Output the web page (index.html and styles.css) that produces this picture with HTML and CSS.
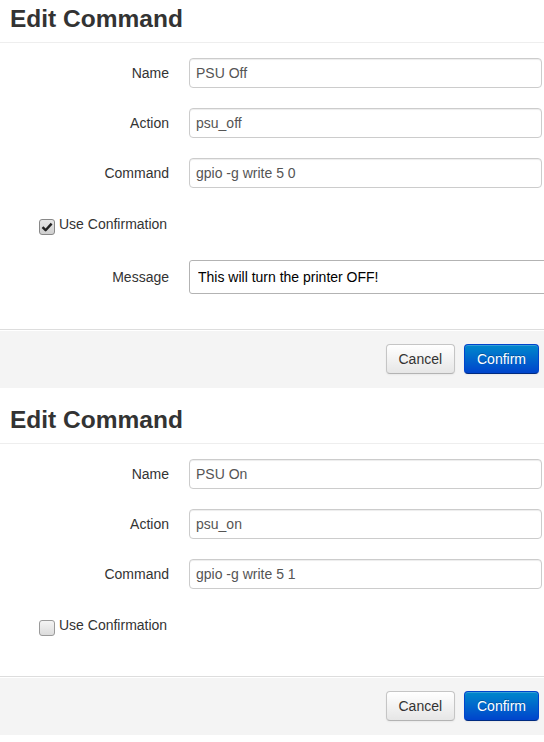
FILE: index.html
```html
<!DOCTYPE html>
<html lang="en">
<head>
  <meta charset="UTF-8">
  <meta name="viewport" content="width=device-width, initial-scale=1.0">
  <title>Edit Command</title>
  <link rel="stylesheet" href="styles.css">
</head>
<body>

<div class="modal">
  <div class="modal-header">
    <h3>Edit Command</h3>
  </div>
  <div class="modal-body">
    <div class="control-group">
      <label class="control-label">Name</label>
      <input type="text" class="field" value="PSU Off">
    </div>
    <div class="control-group">
      <label class="control-label">Action</label>
      <input type="text" class="field" value="psu_off">
    </div>
    <div class="control-group">
      <label class="control-label">Command</label>
      <input type="text" class="field" value="gpio -g write 5 0">
    </div>
    <label class="checkbox">
      <span class="check checked">
        <svg width="12" height="12" viewBox="0 0 12 12"><path d="M1.5 6.2 L4.6 9.2 L10.6 2.6" fill="none" stroke="#222" stroke-width="2.4" stroke-linejoin="round"/></svg>
      </span>
      Use Confirmation
    </label>
    <div class="control-group">
      <label class="control-label">Message</label>
      <input type="text" class="field message" value="This will turn the printer OFF!">
    </div>
  </div>
  <div class="modal-footer">
    <button class="btn">Cancel</button>
    <button class="btn btn-primary">Confirm</button>
  </div>
</div>

<div class="modal second">
  <div class="modal-header">
    <h3>Edit Command</h3>
  </div>
  <div class="modal-body">
    <div class="control-group">
      <label class="control-label">Name</label>
      <input type="text" class="field" value="PSU On">
    </div>
    <div class="control-group">
      <label class="control-label">Action</label>
      <input type="text" class="field" value="psu_on">
    </div>
    <div class="control-group">
      <label class="control-label">Command</label>
      <input type="text" class="field" value="gpio -g write 5 1">
    </div>
    <label class="checkbox">
      <span class="check"></span>
      Use Confirmation
    </label>
  </div>
  <div class="modal-footer">
    <button class="btn">Cancel</button>
    <button class="btn btn-primary">Confirm</button>
  </div>
</div>

</body>
</html>
```

FILE: styles.css
```css
html, body {
  margin: 0;
  overflow: hidden;
}
body {
  font-family: "Liberation Sans", Arial, sans-serif;
  font-size: 14px;
  line-height: 20px;
  color: #333;
  background-color: #fff;
}
.modal {
  overflow: hidden;
}
.second {
  margin-top: 13px;
}
.modal-header {
  height: 43px;
  padding: 0 10px;
  border-bottom: 1px solid #eee;
  box-sizing: border-box;
}
.modal-header h3 {
  margin: 0;
  padding-top: 3px;
  font-size: 24.5px;
  line-height: 32px;
  font-weight: bold;
  color: #333;
}
.modal-body {
  padding: 15px 0 15px 9px;
}
.control-group {
  display: flex;
  align-items: center;
  margin-bottom: 20px;
}
.control-label {
  flex: 0 0 160px;
  text-align: right;
  margin-right: 20px;
  color: #333;
}
.field {
  flex: 0 0 auto;
  width: 353px;
  height: 30px;
  box-sizing: border-box;
  padding: 4px 6px;
  border: 1px solid #ccc;
  border-radius: 4px;
  font-family: inherit;
  font-size: 14px;
  color: #555;
  background-color: #fff;
  box-shadow: inset 0 1px 1px rgba(0, 0, 0, 0.075);
  margin: 0;
}
.field.message {
  width: 420px;
  height: 34px;
  padding: 4px 8px;
  border-color: #b3b3b3;
  border-radius: 3px;
  color: #000;
  box-shadow: none;
}
.checkbox {
  display: flex;
  align-items: flex-start;
  height: 20px;
  padding: 6px 0 0 30px;
  margin-bottom: 26px;
  color: #333;
}
.check {
  flex: 0 0 16px;
  width: 16px;
  height: 16px;
  box-sizing: border-box;
  margin: 5px 4px 0 0;
  border: 1px solid #9a9a9a;
  border-radius: 3px;
  background: linear-gradient(#f4f4f4, #dcdcdc);
  display: flex;
  align-items: center;
  justify-content: center;
}
.check.checked {
  background: linear-gradient(#e6e6e6, #cfcfcf);
  border-color: #888;
}
.modal-footer {
  height: 59px;
  box-sizing: border-box;
  padding: 14px 5px 14px 15px;
  background-color: #f4f4f4;
  border-top: 1px solid #ddd;
  box-shadow: inset 0 1px 0 #fff;
  text-align: right;
}
.btn {
  height: 30px;
  padding: 4px 12px;
  font-family: inherit;
  font-size: 14px;
  line-height: 20px;
  color: #333;
  border: 1px solid #c5c5c5;
  border-bottom-color: #b3b3b3;
  border-radius: 4px;
  background: linear-gradient(#ffffff, #e6e6e6);
  box-shadow: inset 0 1px 0 rgba(255, 255, 255, 0.2), 0 1px 2px rgba(0, 0, 0, 0.05);
  cursor: pointer;
  margin: 0;
}
.btn + .btn {
  margin-left: 5px;
}
.btn-primary {
  color: #fff;
  background: linear-gradient(#0088cc, #0044cc);
  border-color: #0044cc #0044cc #002a80;
  text-shadow: 0 -1px 0 rgba(0, 0, 0, 0.25);
}
```
